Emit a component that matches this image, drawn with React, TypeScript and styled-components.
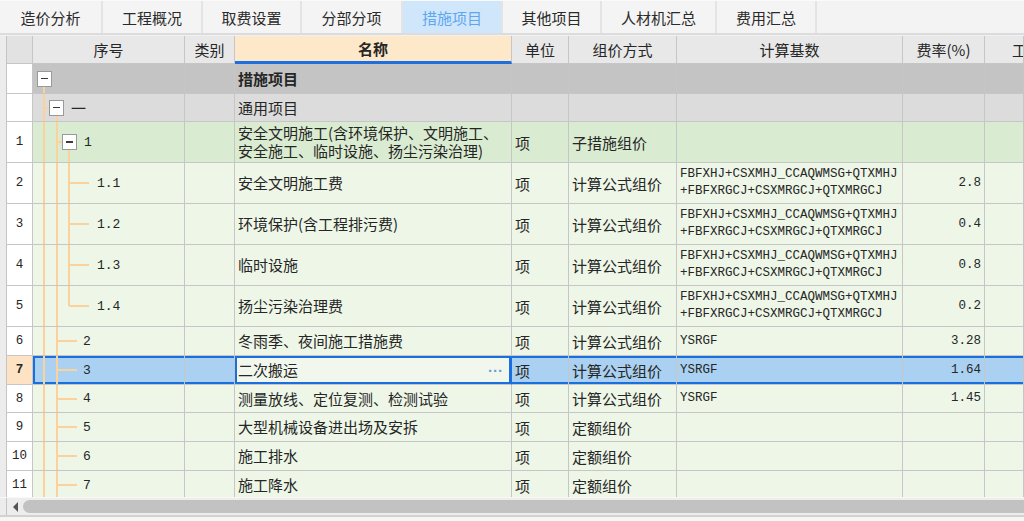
import styled, { createGlobalStyle, css } from "styled-components";

const GlobalStyle = createGlobalStyle`
  html, body {
    margin: 0;
    padding: 0;
    background: #f0f0f0;
  }
  * {
    box-sizing: border-box;
  }
`;

const COLUMNS = "26px 152px 50px 277px 57px 108px 226px 82px 1fr";
const LINE = "#c6c6c6";
const GUIDE = "#fcd29c";
const SELECT = "#1a6fe0";

type Tone = "root" | "group" | "parent" | "item";

const toneBg: Record<Tone, string> = {
  root: "#c4c4c4",
  group: "#dcdcdc",
  parent: "#d9ebd0",
  item: "#edf6e7",
};

const Page = styled.div`
  width: 1024px;
  height: 521px;
  overflow: hidden;
  display: flex;
  flex-direction: column;
  background: #f0f0f0;
  font-family: "Noto Sans CJK SC", "Noto Sans", sans-serif;
  color: #262626;
`;

const TabBar = styled.div`
  height: 35px;
  flex: none;
  display: flex;
  background: #f3f3f3;
  border-top: 1px solid #fafafa;
  border-bottom: 2px solid #dcdcdc;
`;

const Tab = styled.div<{ $w: number; $active?: boolean }>`
  width: ${(p) => p.$w}px;
  display: flex;
  align-items: center;
  justify-content: center;
  font-size: 15px;
  border-right: 2px solid #e4e4e4;
  background: ${(p) => (p.$active ? "#cfe6fb" : "#f4f4f4")};
  color: ${(p) => (p.$active ? "#5ea6f0" : "#2a2a2a")};
`;

const GridArea = styled.div`
  flex: 1;
  min-height: 0;
  display: flex;
  margin-top: 1px;
  background: #ececec;
`;

const LeftStrip = styled.div`
  width: 7px;
  flex: none;
  border-right: 1px solid #c4c4c4;
`;

const Table = styled.div`
  flex: 1;
  overflow: hidden;
  display: flex;
  flex-direction: column;
`;

const RowGrid = styled.div<{ $h: number }>`
  display: grid;
  grid-template-columns: ${COLUMNS};
  height: ${(p) => p.$h}px;
  flex: none;
`;

const HeadCell = styled.div<{ $hot?: boolean; $num?: boolean; $edge?: boolean }>`
  display: flex;
  align-items: center;
  justify-content: ${(p) => (p.$edge ? "flex-start" : "center")};
  padding-left: ${(p) => (p.$edge ? "27px" : "0")};
  font-size: 15px;
  border-right: 1px solid ${LINE};
  border-bottom: 1px solid ${LINE};
  background: ${(p) => (p.$num ? "#e2e2e2" : "#e8e8e8")};
  white-space: nowrap;
  overflow: hidden;
  ${(p) =>
    p.$hot &&
    css`
      background: #fde8ca;
      font-weight: bold;
      border-bottom: 3px solid #1f6ee0;
    `}
`;

const Cell = styled.div<{
  $bg: string;
  $align?: "left" | "right" | "center";
  $mono?: boolean;
  $sel?: "row" | "first" | "box";
  $flush?: boolean;
}>`
  position: relative;
  display: flex;
  align-items: center;
  justify-content: ${(p) =>
    p.$align === "right" ? "flex-end" : p.$align === "center" ? "center" : "flex-start"};
  padding: ${(p) => (p.$flush ? "0" : "0 3px")};
  background: ${(p) => p.$bg};
  border-right: 1px solid ${LINE};
  border-bottom: 1px solid ${LINE};
  font-size: ${(p) => (p.$mono ? "12.5px" : "15px")};
  font-family: ${(p) =>
    p.$mono
      ? `"Liberation Mono", "Noto Sans CJK SC", monospace`
      : `"Noto Sans CJK SC", "Noto Sans", sans-serif`};
  line-height: 17px;
  white-space: nowrap;
  overflow: hidden;
  ${(p) =>
    p.$sel === "row" &&
    css`
      box-shadow: inset 0 2px 0 ${SELECT}, inset 0 -2px 0 ${SELECT};
    `}
  ${(p) =>
    p.$sel === "first" &&
    css`
      box-shadow: inset 0 2px 0 ${SELECT}, inset 0 -2px 0 ${SELECT}, inset 2px 0 0 ${SELECT};
    `}
  ${(p) =>
    p.$sel === "box" &&
    css`
      box-shadow: inset 0 0 0 2px ${SELECT};
      border-right-color: ${SELECT};
    `}
`;

const NumCell = styled.div<{ $sel?: boolean }>`
  display: flex;
  align-items: center;
  justify-content: center;
  font-family: "Liberation Mono", monospace;
  font-size: 12.5px;
  background: ${(p) => (p.$sel ? "#fde3c3" : "#ffffff")};
  font-weight: ${(p) => (p.$sel ? "bold" : "normal")};
  border-right: 1px solid ${LINE};
  border-bottom: 1px solid ${LINE};
`;

const Lines = styled.div`
  display: flex;
  flex-direction: column;
`;

const Label = styled.span<{ $bold?: boolean }>`
  font-weight: ${(p) => (p.$bold ? "bold" : "normal")};
  line-height: 18px;
`;

const More = styled.span`
  margin-left: auto;
  color: #6b9fd8;
  font-family: "Liberation Sans", sans-serif;
  font-size: 15px;
  font-weight: bold;
  padding-right: 5px;
`;

const Guide = styled.span<{ $x: number; $from: "top" | "mid"; $to: "bottom" | "mid" }>`
  position: absolute;
  left: ${(p) => p.$x - 1}px;
  width: 2px;
  top: ${(p) => (p.$from === "top" ? "0" : "50%")};
  bottom: ${(p) => (p.$to === "bottom" ? "-1px" : "50%")};
  background: ${GUIDE};
`;

const Elbow = styled.span<{ $x1: number; $x2: number }>`
  position: absolute;
  left: ${(p) => p.$x1}px;
  width: ${(p) => p.$x2 - p.$x1}px;
  top: calc(50% - 1px);
  height: 2px;
  background: ${GUIDE};
`;

const Toggle = styled.span<{ $x: number }>`
  position: relative;
  margin-left: ${(p) => p.$x}px;
  width: 15px;
  height: 16px;
  flex: none;
  background: #ffffff;
  border: 1px solid #9a9a9a;
  display: flex;
  align-items: center;
  justify-content: center;
  &::after {
    content: "";
    width: 7px;
    height: 1.5px;
    background: #3a3a3a;
  }
`;

const TreeText = styled.span<{ $x: number; $mono?: boolean }>`
  position: relative;
  margin-left: ${(p) => p.$x}px;
  font-family: ${(p) =>
    p.$mono ? `"Liberation Mono", monospace` : `"Noto Sans CJK SC", sans-serif`};
  font-size: ${(p) => (p.$mono ? "13px" : "15px")};
`;

const ScrollBar = styled.div`
  height: 18px;
  flex: none;
  display: flex;
  align-items: center;
  background: #ededed;
  border-top: 1px solid #f8f8f8;
`;

const ScrollStrip = styled.div`
  width: 7px;
  align-self: stretch;
  background: #ececec;
  border-right: 1px solid #c4c4c4;
`;

const Arrow = styled.span`
  margin-left: 6px;
  width: 0;
  height: 0;
  border-top: 5px solid transparent;
  border-bottom: 5px solid transparent;
  border-right: 5px solid #555555;
`;

const Thumb = styled.div`
  margin-left: 5px;
  flex: 1;
  height: 13px;
  margin-right: -20px;
  border-radius: 7px;
  background: #c2c2c2;
`;

const Footer = styled.div`
  height: 6px;
  flex: none;
  background: #f6f6f6;
  border-top: 2px solid #d2d2d2;
`;

type GuideSpec = { x: number; from: "top" | "mid"; to: "bottom" | "mid" };
type Tree = {
  guides: GuideSpec[];
  elbow?: [number, number];
  toggle?: number;
  text?: string;
  textX?: number;
  mono?: boolean;
};

type Row = {
  no: string;
  tone: Tone;
  tree: Tree;
  name: string;
  unit?: string;
  method?: string;
  base?: string[];
  rate?: string;
  tall?: boolean;
  bold?: boolean;
  selected?: boolean;
};

const full = (x: number): GuideSpec => ({ x, from: "top", to: "bottom" });
const BASE_LONG = ["FBFXHJ+CSXMHJ_CCAQWMSG+QTXMHJ", "+FBFXRGCJ+CSXMRGCJ+QTXMRGCJ"];

const subItem = (label: string, last = false): Tree => ({
  guides: [full(11), full(24), last ? { x: 36, from: "top", to: "mid" } : full(36)],
  elbow: [36, 56],
  text: label,
  textX: 64,
  mono: true,
});

const item = (label: string): Tree => ({
  guides: [full(11), full(24)],
  elbow: [24, 44],
  text: label,
  textX: 50,
  mono: true,
});

const rows: Row[] = [
  {
    no: "",
    tone: "root",
    tree: { guides: [{ x: 11, from: "mid", to: "bottom" }], toggle: 4 },
    name: "措施项目",
    bold: true,
  },
  {
    no: "",
    tone: "group",
    tree: {
      guides: [full(11), { x: 24, from: "mid", to: "bottom" }],
      elbow: [11, 16],
      toggle: 16,
      text: "一",
      textX: 7,
    },
    name: "通用项目",
  },
  {
    no: "1",
    tone: "parent",
    tree: {
      guides: [full(11), full(24), { x: 36, from: "mid", to: "bottom" }],
      elbow: [24, 29],
      toggle: 29,
      text: "1",
      textX: 7,
      mono: true,
    },
    name: "安全文明施工(含环境保护、文明施工、\n安全施工、临时设施、扬尘污染治理)",
    unit: "项",
    method: "子措施组价",
    tall: true,
  },
  { no: "2", tone: "item", tree: subItem("1.1"), name: "安全文明施工费", unit: "项", method: "计算公式组价", base: BASE_LONG, rate: "2.8", tall: true },
  { no: "3", tone: "item", tree: subItem("1.2"), name: "环境保护(含工程排污费)", unit: "项", method: "计算公式组价", base: BASE_LONG, rate: "0.4", tall: true },
  { no: "4", tone: "item", tree: subItem("1.3"), name: "临时设施", unit: "项", method: "计算公式组价", base: BASE_LONG, rate: "0.8", tall: true },
  { no: "5", tone: "item", tree: subItem("1.4", true), name: "扬尘污染治理费", unit: "项", method: "计算公式组价", base: BASE_LONG, rate: "0.2", tall: true },
  { no: "6", tone: "item", tree: item("2"), name: "冬雨季、夜间施工措施费", unit: "项", method: "计算公式组价", base: ["YSRGF"], rate: "3.28" },
  { no: "7", tone: "item", tree: item("3"), name: "二次搬运", unit: "项", method: "计算公式组价", base: ["YSRGF"], rate: "1.64", selected: true },
  { no: "8", tone: "item", tree: item("4"), name: "测量放线、定位复测、检测试验", unit: "项", method: "计算公式组价", base: ["YSRGF"], rate: "1.45" },
  { no: "9", tone: "item", tree: item("5"), name: "大型机械设备进出场及安拆", unit: "项", method: "定额组价" },
  { no: "10", tone: "item", tree: item("6"), name: "施工排水", unit: "项", method: "定额组价" },
  { no: "11", tone: "item", tree: item("7"), name: "施工降水", unit: "项", method: "定额组价" },
];

const tabs = [
  { label: "造价分析", w: 103 },
  { label: "工程概况", w: 100 },
  { label: "取费设置", w: 99 },
  { label: "分部分项", w: 101 },
  { label: "措施项目", w: 100, active: true },
  { label: "其他项目", w: 99 },
  { label: "人材机汇总", w: 115 },
  { label: "费用汇总", w: 100 },
];

const heads = ["序号", "类别", "名称", "单位", "组价方式", "计算基数", "费率(%)", "工"];

const rowHeight = (r: Row, i: number) => {
  if (r.tall) return 41;
  if (i === 0) return 30;
  if (i === 1 || r.no === "8") return 28;
  return 29;
};

const TreeCell = ({ tree, bg, sel }: { tree: Tree; bg: string; sel: boolean }) => (
  <Cell $bg={bg} $sel={sel ? "first" : undefined} $flush>
    {tree.guides.map((g, i) => (
      <Guide key={i} $x={g.x} $from={g.from} $to={g.to} />
    ))}
    {tree.elbow && <Elbow $x1={tree.elbow[0]} $x2={tree.elbow[1]} />}
    {tree.toggle !== undefined && <Toggle $x={tree.toggle} />}
    {tree.text && (
      <TreeText $x={tree.textX ?? 0} $mono={tree.mono}>
        {tree.text}
      </TreeText>
    )}
  </Cell>
);

const DataRow = ({ row, index }: { row: Row; index: number }) => {
  const sel = row.selected;
  const bg = sel ? "#aad1f1" : toneBg[row.tone];
  const s = sel ? ("row" as const) : undefined;
  return (
    <RowGrid $h={rowHeight(row, index)}>
      <NumCell $sel={sel}>{row.no}</NumCell>
      <TreeCell tree={row.tree} bg={bg} sel={!!sel} />
      <Cell $bg={bg} $sel={s} />
      <Cell $bg={sel ? "#f1f7ed" : bg} $sel={sel ? "box" : undefined}>
        <Lines>
          {row.name.split("\n").map((l) => (
            <Label key={l} $bold={row.bold}>
              {l}
            </Label>
          ))}
        </Lines>
        {sel && <More>···</More>}
      </Cell>
      <Cell $bg={bg} $sel={s}>{row.unit}</Cell>
      <Cell $bg={bg} $sel={s}>{row.method}</Cell>
      <Cell $bg={bg} $sel={s} $mono>
        <Lines>
          {(row.base ?? []).map((l) => (
            <span key={l}>{l}</span>
          ))}
        </Lines>
      </Cell>
      <Cell $bg={bg} $sel={s} $mono $align="right">
        {row.rate}
      </Cell>
      <Cell $bg={bg} $sel={s} />
    </RowGrid>
  );
};

export default function App() {
  return (
    <Page>
      <GlobalStyle />
      <TabBar>
        {tabs.map((t) => (
          <Tab key={t.label} $w={t.w} $active={t.active}>
            {t.label}
          </Tab>
        ))}
      </TabBar>
      <GridArea>
        <LeftStrip />
        <Table>
          <RowGrid $h={28}>
            <HeadCell $num />
            {heads.map((h) => (
              <HeadCell key={h} $hot={h === "名称"} $edge={h === "工"}>
                {h}
              </HeadCell>
            ))}
          </RowGrid>
          {rows.map((r, i) => (
            <DataRow key={i} row={r} index={i} />
          ))}
        </Table>
      </GridArea>
      <ScrollBar>
        <ScrollStrip />
        <Arrow />
        <Thumb />
      </ScrollBar>
      <Footer />
    </Page>
  );
}
